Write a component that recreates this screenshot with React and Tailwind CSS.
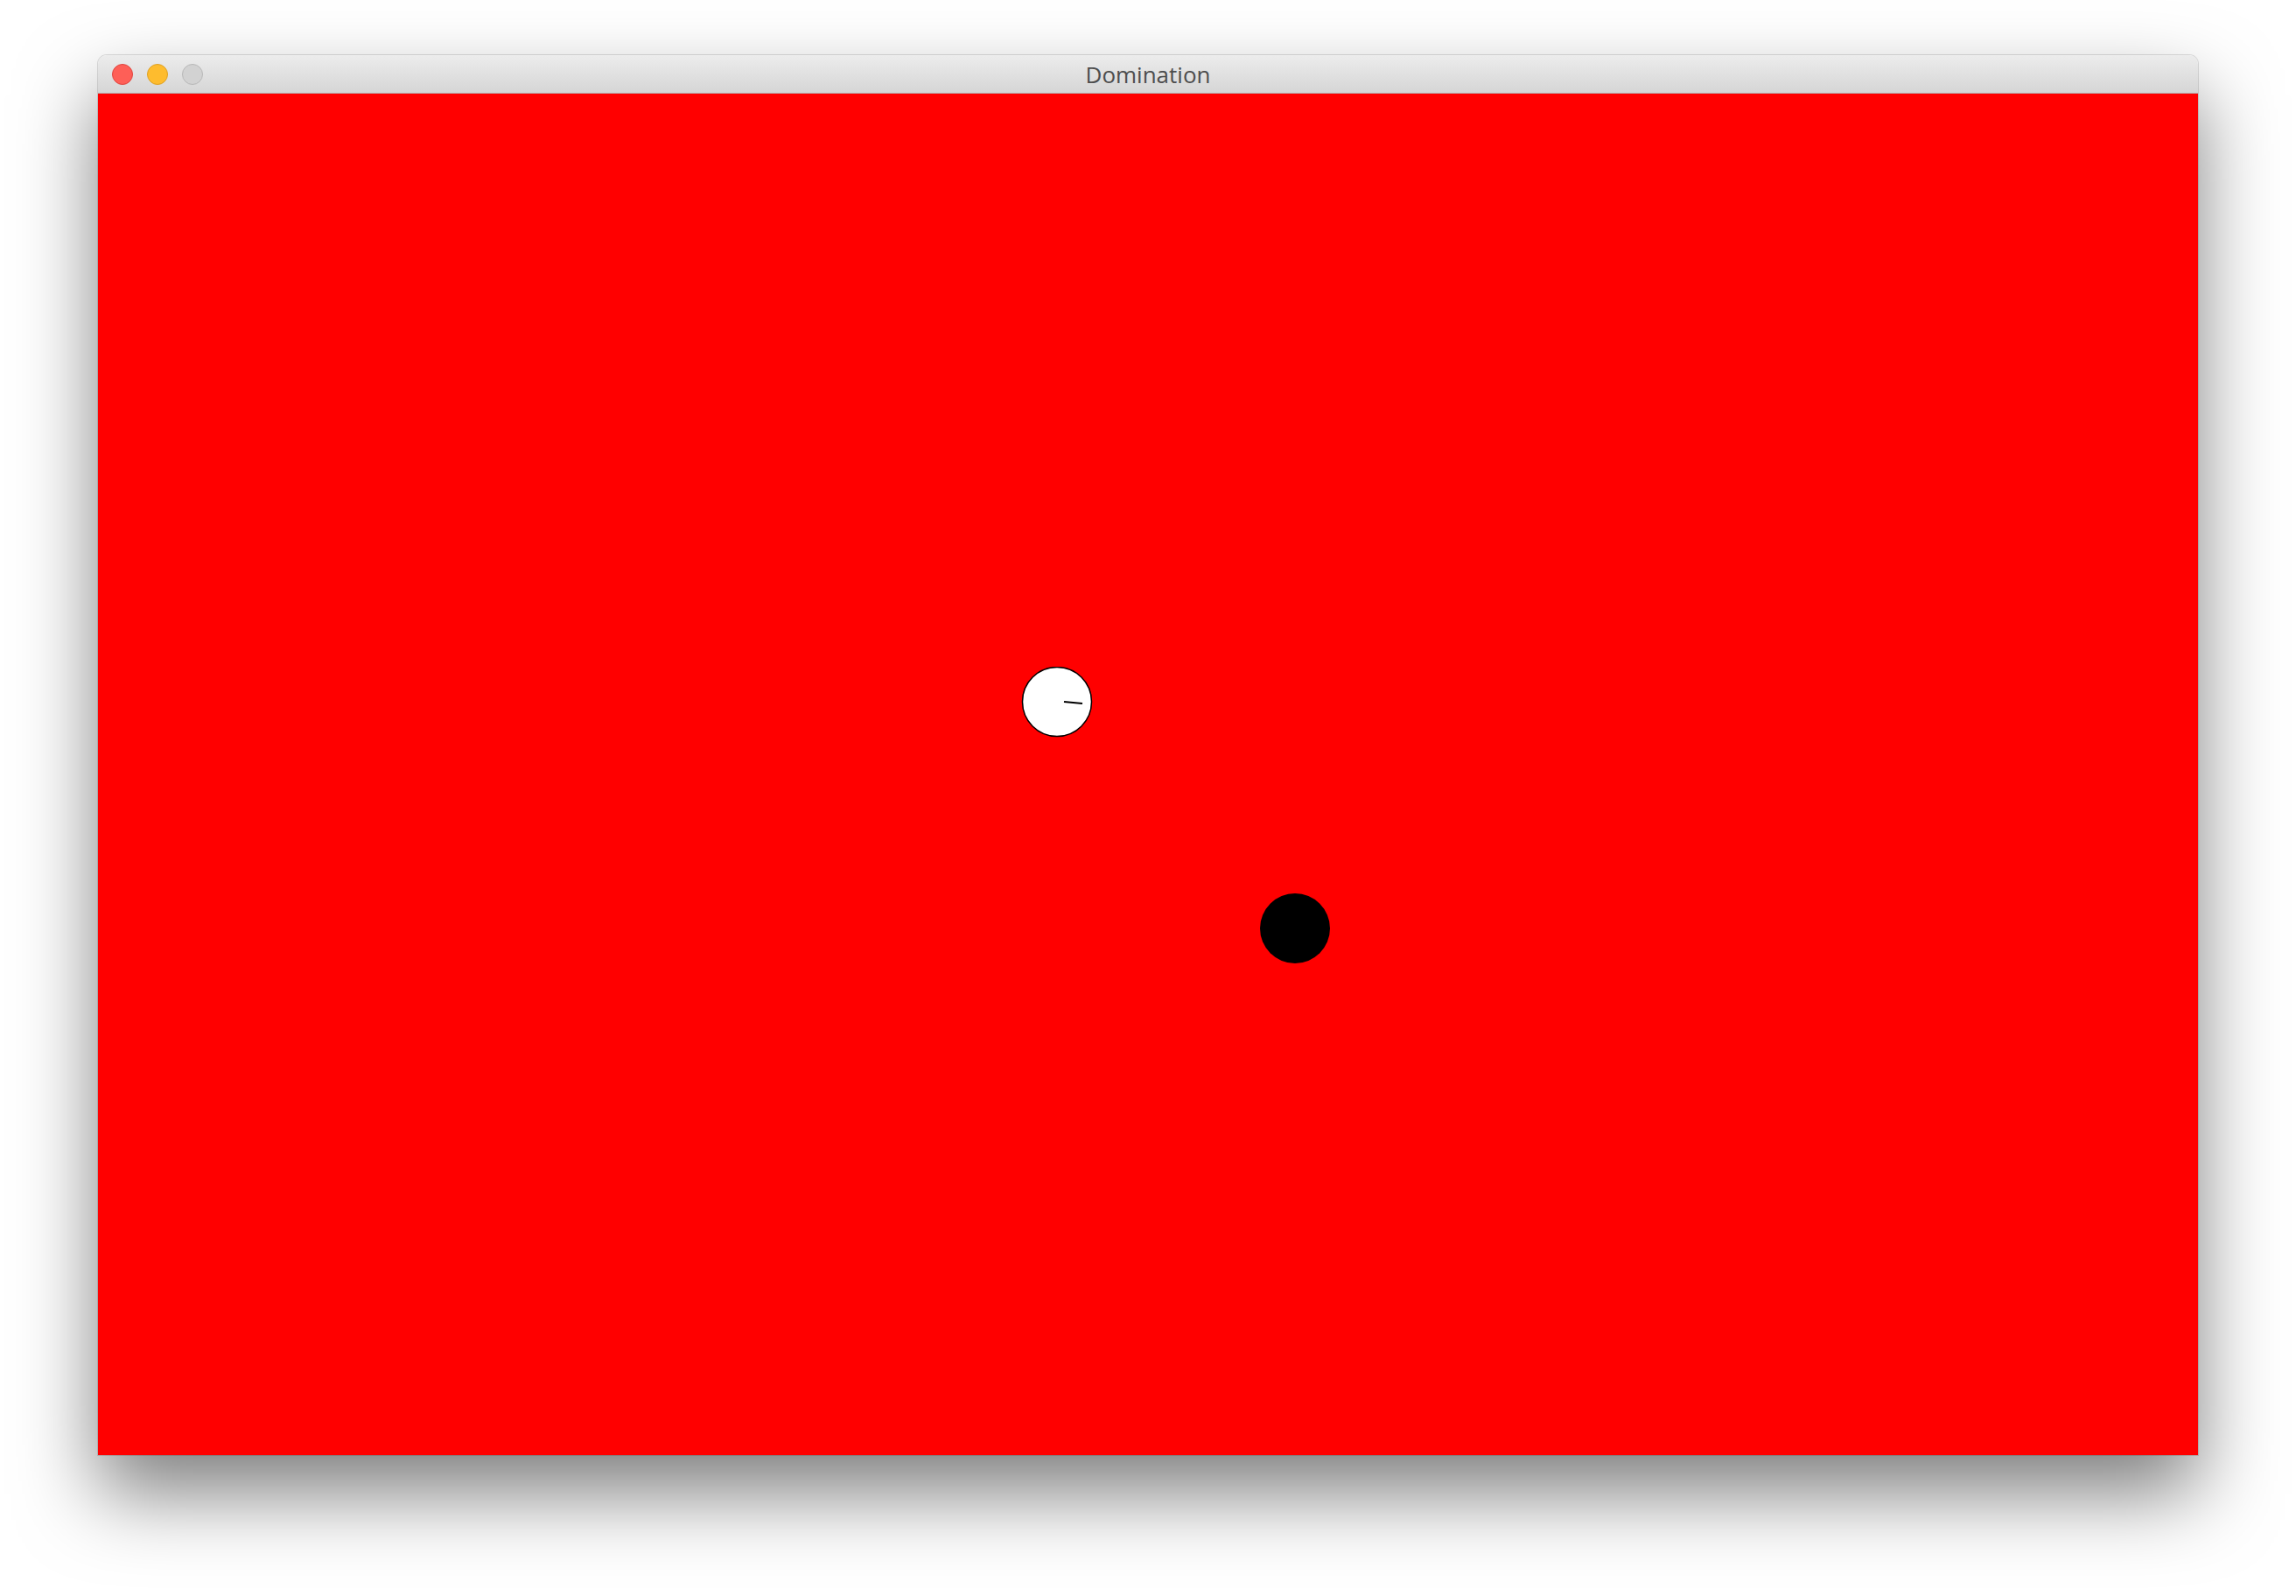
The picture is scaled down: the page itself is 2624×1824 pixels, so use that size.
export default function App() {
  return (
    <div className="w-[2624px] h-[1824px] bg-white pt-[63px] pl-[112px]" style={{ fontFamily: '"Liberation Sans", Arial, sans-serif' }}>
      <div className="w-[2400px] flex flex-col rounded-t-[10px] shadow-[0_44px_90px_rgba(0,0,0,0.5),0_0_0_1px_rgba(0,0,0,0.12)]">
        <div className="relative h-[44px] flex items-center rounded-t-[10px] bg-gradient-to-b from-[#ececec] to-[#d6d6d6] border-b border-[#b4b4b4] px-[16px] gap-[16px]">
          <div className="w-[24px] h-[24px] rounded-full bg-[#fe5f57] border border-[#e0443e]" />
          <div className="w-[24px] h-[24px] rounded-full bg-[#febc2e] border border-[#dea123]" />
          <div className="w-[24px] h-[24px] rounded-full bg-[#d2d2d2] border border-[#b8b8b8]" />
          <div className="absolute inset-0 flex items-center justify-center pointer-events-none">
            <span className="text-[26px] text-[#4d4d4d] leading-none" style={{ fontFamily: '"Open Sans", "Liberation Sans", sans-serif' }}>Domination</span>
          </div>
        </div>
        <div className="relative h-[1556px] bg-[#ff0000]">
          <svg className="absolute left-[1055px] top-[655px]" width="82" height="82" viewBox="0 0 82 82">
            <circle cx="41" cy="40" r="39.5" fill="#ffffff" stroke="#000000" strokeWidth="1.5" />
            <line x1="49" y1="40" x2="70" y2="42" stroke="#000000" strokeWidth="2" />
          </svg>
          <svg className="absolute left-[1327px] top-[913px]" width="82" height="82" viewBox="0 0 82 82">
            <circle cx="41" cy="41" r="40" fill="#000000" />
          </svg>
        </div>
      </div>
    </div>
  );
}
